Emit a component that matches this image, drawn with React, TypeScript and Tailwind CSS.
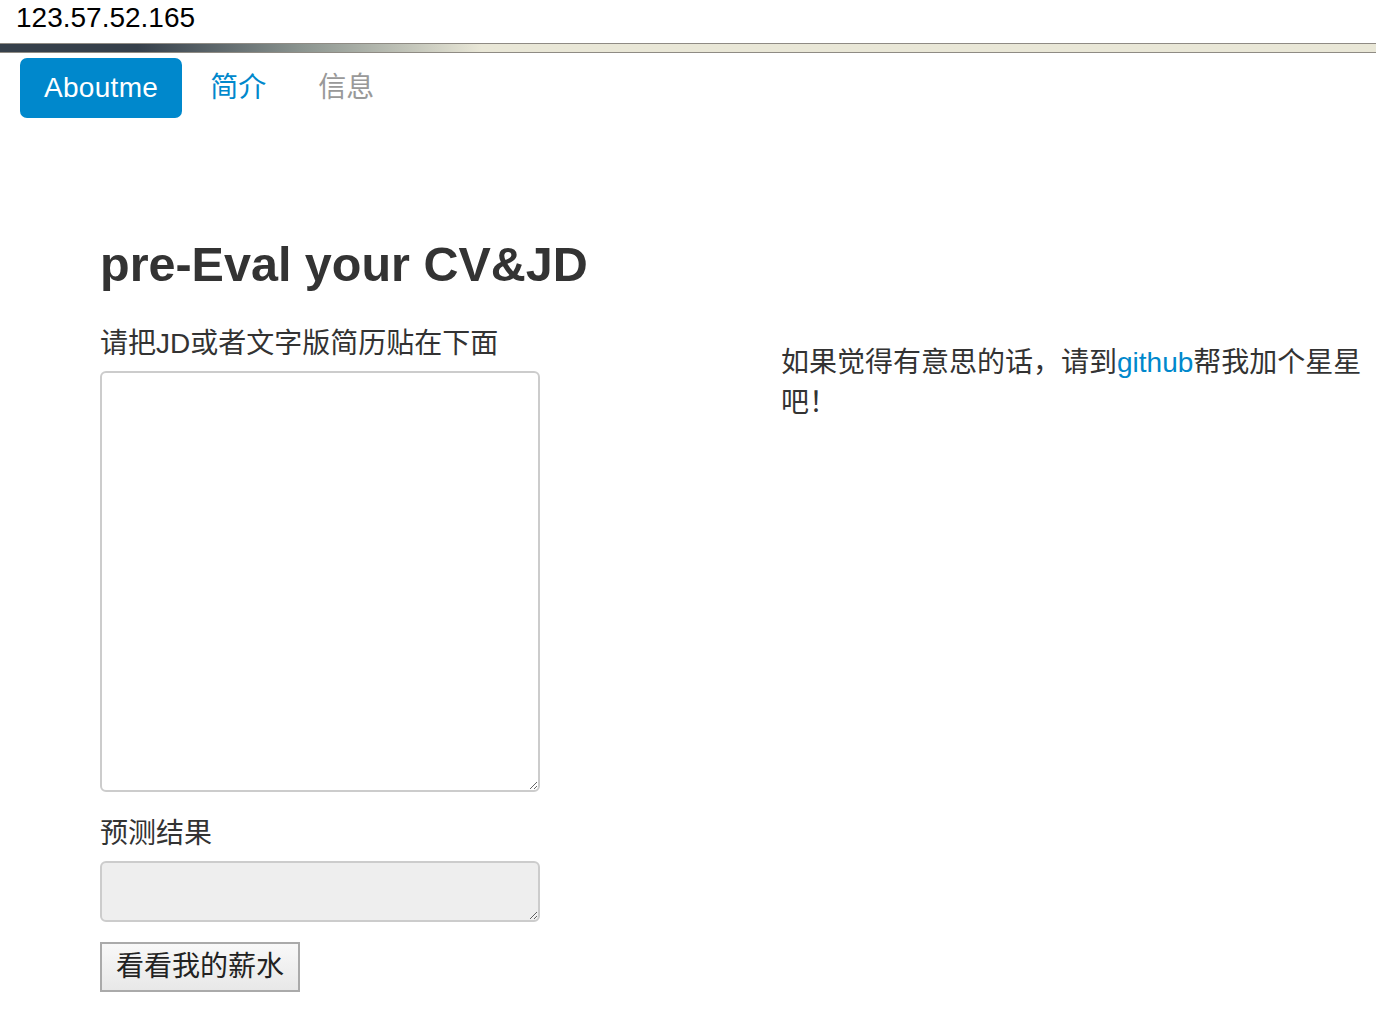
import React from 'react';

const font = { fontFamily: '"Liberation Sans", "Noto Sans CJK SC", sans-serif' };

export default function App() {
  return (
    <div className="min-h-[1020px] w-[1376px] bg-white text-[#333]" style={font}>
      <div className="h-[43px] pl-4 pt-[1px] text-[28px] leading-[34px] text-black">123.57.52.165</div>
      <div className="h-[10px] border-y border-[#8f8b84] bg-gradient-to-r from-[#36404b] from-10% via-[#8c9590] via-22% to-[#e9e7d7] to-35%" />

      <nav className="flex pl-5 pt-[5px]">
        <a className="mr-1 flex h-[60px] items-center rounded-[7px] bg-[#0088cc] px-6 text-[28px] tracking-[0.3px] text-white">Aboutme</a>
        <a className="mr-1 flex h-[60px] items-center px-6 text-[28px] text-[#0088cc]">简介</a>
        <a className="mr-1 flex h-[60px] items-center px-6 text-[28px] text-[#999]">信息</a>
      </nav>

      <div className="flex pl-[100px] pt-[116px]">
        <div className="flex w-[440px] flex-col">
          <h1 className="whitespace-nowrap text-[48.5px] font-bold leading-[60px] text-[#333]">pre-Eval your CV&amp;JD</h1>
          <label className="mt-[30px] text-[28px] leading-[40px] text-[#333]">请把JD或者文字版简历贴在下面</label>
          <textarea className="mt-[7px] h-[421px] w-[440px] rounded-[6px] border-2 border-[#cccccc] bg-white p-2" />
          <label className="mt-[22px] text-[28px] leading-[40px] text-[#333]">预测结果</label>
          <textarea
            disabled
            className="mt-[7px] h-[61px] w-[440px] rounded-[6px] border-2 border-[#cccccc] bg-[#eeeeee] p-2"
          />
          <div className="mt-[20px]">
            <button className="h-[50px] border-2 border-[#aaaaaa] bg-gradient-to-b from-[#f8f8f8] to-[#e8e8e8] px-[14px] text-[28px] leading-[40px] text-[#222]">
              看看我的薪水
            </button>
          </div>
        </div>
        <div className="ml-[241px] w-[590px] pt-[109px]">
          <p className="text-[28px] leading-[40px] text-[#333]">
            如果觉得有意思的话，请到<a className="text-[#0088cc]">github</a>帮我加个星星吧！
          </p>
        </div>
      </div>
    </div>
  );
}
